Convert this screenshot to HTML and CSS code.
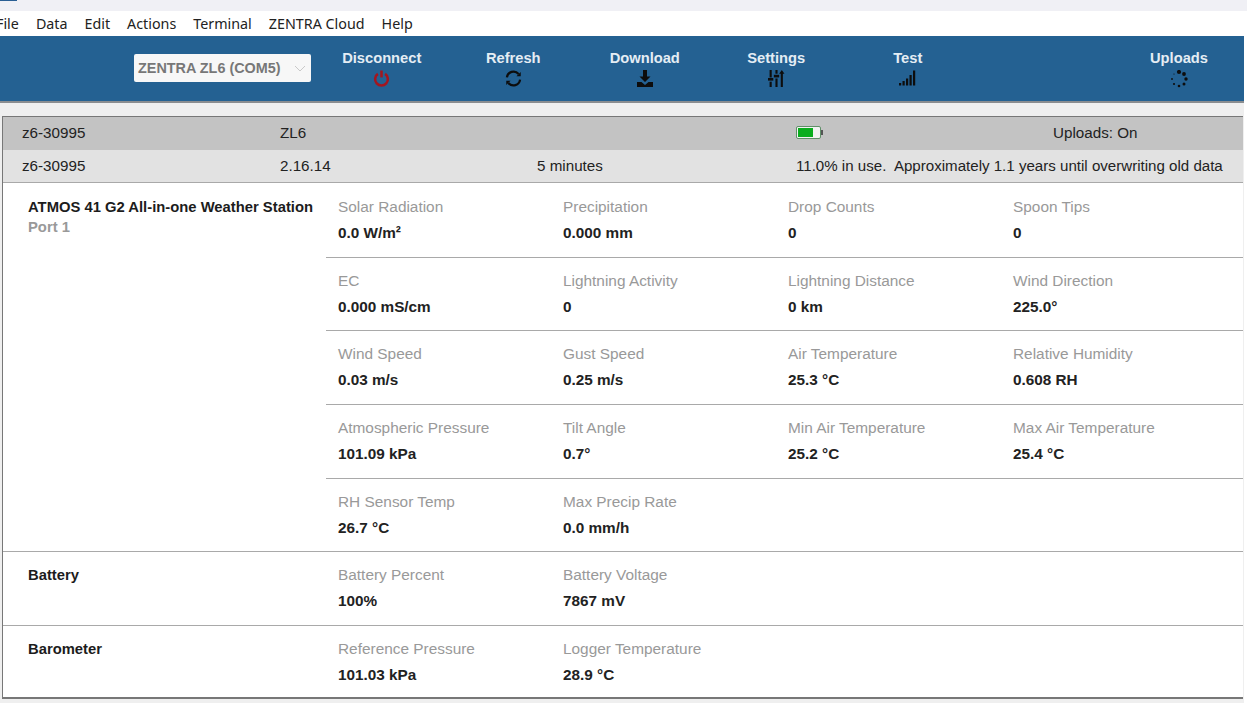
FILE: index.html
```html
<!DOCTYPE html>
<html lang="en">
<head>
    <meta charset="UTF-8">
    <title>ZENTRA Utility</title>
    <link rel="stylesheet" href="styles.css">
</head>
<body>
    <div class="titlebar"><span class="title-icon"></span></div>

    <nav class="menubar">
        <span class="menu-file">File</span>
        <span>Data</span>
        <span>Edit</span>
        <span>Actions</span>
        <span>Terminal</span>
        <span>ZENTRA Cloud</span>
        <span>Help</span>
    </nav>

    <header class="toolbar">
        <div class="device-select">
            <span>ZENTRA ZL6 (COM5)</span>
            <svg class="chevron" width="12" height="7" viewBox="0 0 12 7"><path d="M1 1l5 5 5-5" fill="none" stroke="#c9c9c9" stroke-width="1"/></svg>
        </div>
        <div class="tool">
            <span class="tool-name">Disconnect</span>
            <svg width="17" height="17" viewBox="0 0 16 16"><path d="M4.600 3.600a6 6 0 1 0 6.800 0" fill="none" stroke="#a3161f" stroke-width="2.400"/><path d="M8 .5v6.500" stroke="#a3161f" stroke-width="2.400"/></svg>
        </div>
        <div class="tool">
            <span class="tool-name">Refresh</span>
            <svg width="17" height="17" viewBox="0 0 16 16"><path d="M1.800 7A6.300 6.300 0 0 1 12.800 3.700M14.200 9A6.300 6.300 0 0 1 3.200 12.300" fill="none" stroke="#0d0d0d" stroke-width="2.100"/><path d="M14.800 1.800v4h-4zM1.200 14.200v-4h4z" fill="#0d0d0d"/></svg>
        </div>
        <div class="tool">
            <span class="tool-name">Download</span>
            <svg width="18" height="17" viewBox="0 0 18 17"><path d="M7 0h4v6.500h3.500L9 12 3.500 6.500H7z" fill="#0d0d0d"/><path d="M1 12h4.500L9 15l3.500-3H17v5H1z" fill="#0d0d0d"/></svg>
        </div>
        <div class="tool">
            <span class="tool-name">Settings</span>
            <svg width="17" height="17" viewBox="0 0 16 16"><g fill="#0d0d0d"><rect x="1.500" y="0" width="2" height="7"/><rect x="0" y="7.500" width="5" height="2.500"/><rect x="1.500" y="11" width="2" height="5"/><rect x="7" y="0" width="2" height="3.500"/><rect x="5.500" y="4.500" width="5" height="2.500"/><rect x="7" y="8" width="2" height="8"/><path d="M13 0l2.500 3.500h-1.500V16h-2V3.500h-1.500z"/></g></svg>
        </div>
        <div class="tool">
            <span class="tool-name">Test</span>
            <svg width="18" height="17" viewBox="0 0 18 16"><g fill="#0d0d0d"><rect x="0" y="12.500" width="2.200" height="2.500"/><rect x="3.500" y="10.500" width="2.200" height="4.500"/><rect x="7" y="8" width="2.200" height="7"/><rect x="10.500" y="4.500" width="2.200" height="10.500"/><rect x="14" y="0" width="2.200" height="15"/></g></svg>
        </div>
        <div class="tool tool-uploads">
            <span class="tool-name">Uploads</span>
            <svg width="18" height="18" viewBox="0 0 18 18"><g fill="#0d0d0d"><circle cx="9" cy="2" r="2.100"/><circle cx="14" cy="4" r="1.900"/><circle cx="16" cy="9" r="1.700"/><circle cx="14" cy="14" r="1.500"/><circle cx="9" cy="16" r="1.300"/><circle cx="4" cy="14" r="1.100"/><circle cx="2" cy="9" r=".9"/><circle cx="4" cy="4" r=".6"/></g></svg>
        </div>
    </header>

    <main class="content">
        <div class="panel">
            <div class="status status-top">
                <span>z6-30995</span>
                <span>ZL6</span>
                <span></span>
                <span class="battery"><span class="battery-fill"></span></span>
                <span>Uploads: On</span>
            </div>
            <div class="status status-sub">
                <span>z6-30995</span>
                <span>2.16.14</span>
                <span>5 minutes</span>
                <span class="status-wide">11.0% in use.&nbsp; Approximately 1.1 years until overwriting old data</span>
            </div>

            <section class="sensor">
                <div class="sensor-name">
                    <strong>ATMOS 41 G2 All-in-one Weather Station</strong>
                    <span>Port 1</span>
                </div>
                <div class="readings">
                    <div class="row">
                        <div class="reading"><span>Solar Radiation</span><b>0.0 W/m²</b></div>
                        <div class="reading"><span>Precipitation</span><b>0.000 mm</b></div>
                        <div class="reading"><span>Drop Counts</span><b>0</b></div>
                        <div class="reading"><span>Spoon Tips</span><b>0</b></div>
                    </div>
                    <div class="row">
                        <div class="reading"><span>EC</span><b>0.000 mS/cm</b></div>
                        <div class="reading"><span>Lightning Activity</span><b>0</b></div>
                        <div class="reading"><span>Lightning Distance</span><b>0 km</b></div>
                        <div class="reading"><span>Wind Direction</span><b>225.0°</b></div>
                    </div>
                    <div class="row">
                        <div class="reading"><span>Wind Speed</span><b>0.03 m/s</b></div>
                        <div class="reading"><span>Gust Speed</span><b>0.25 m/s</b></div>
                        <div class="reading"><span>Air Temperature</span><b>25.3 °C</b></div>
                        <div class="reading"><span>Relative Humidity</span><b>0.608 RH</b></div>
                    </div>
                    <div class="row">
                        <div class="reading"><span>Atmospheric Pressure</span><b>101.09 kPa</b></div>
                        <div class="reading"><span>Tilt Angle</span><b>0.7°</b></div>
                        <div class="reading"><span>Min Air Temperature</span><b>25.2 °C</b></div>
                        <div class="reading"><span>Max Air Temperature</span><b>25.4 °C</b></div>
                    </div>
                    <div class="row">
                        <div class="reading"><span>RH Sensor Temp</span><b>26.7 °C</b></div>
                        <div class="reading"><span>Max Precip Rate</span><b>0.0 mm/h</b></div>
                    </div>
                </div>
            </section>

            <section class="sensor sensor-small">
                <div class="sensor-name"><strong>Battery</strong></div>
                <div class="readings">
                    <div class="row">
                        <div class="reading"><span>Battery Percent</span><b>100%</b></div>
                        <div class="reading"><span>Battery Voltage</span><b>7867 mV</b></div>
                    </div>
                </div>
            </section>

            <section class="sensor sensor-small">
                <div class="sensor-name"><strong>Barometer</strong></div>
                <div class="readings">
                    <div class="row">
                        <div class="reading"><span>Reference Pressure</span><b>101.03 kPa</b></div>
                        <div class="reading"><span>Logger Temperature</span><b>28.9 °C</b></div>
                    </div>
                </div>
            </section>
        </div>
    </main>
</body>
</html>
```

FILE: styles.css
```css
/* Basic Styles */
html, body {
    height: 100%;
}

body {
    font-family: "Liberation Sans", Arial, sans-serif;
    font-size: 15.2px;
    color: #222;
    background-color: #fff;
    margin: 0;
    overflow: hidden;
}

.titlebar {
    height: 11px;
    background-color: #f0f0f5;
}

.title-icon {
    display: block;
    width: 17px;
    height: 1px;
    background-color: #2a5f94;
}

/* Menu */
.menubar {
    display: flex;
    gap: 17px;
    height: 25px;
    align-items: center;
    font-family: "Noto Sans", sans-serif;
    font-size: 14.300px;
    color: #222;
}

.menu-file {
    margin-left: -4px;
}

/* Toolbar */
.toolbar {
    display: flex;
    width: 1244px;
    height: 67px;
    box-sizing: border-box;
    padding-left: 134px;
    background-color: #246192;
    border-bottom: 2px solid #8a8d90;
}

.device-select {
    display: flex;
    align-items: center;
    justify-content: space-between;
    box-sizing: border-box;
    width: 177px;
    height: 28px;
    margin: 18px 5px 0 0;
    padding: 0 5px 0 4px;
    background-color: #f7f7f7;
    border-radius: 2px;
    font-size: 14.400px;
    font-weight: bold;
    color: #777;
}

.tool {
    display: flex;
    flex-direction: column;
    align-items: center;
    width: 131.500px;
    padding-top: 14px;
    color: #e4edf4;
    font-size: 14.700px;
    font-weight: bold;
}

.tool-name {
    line-height: 16px;
    margin-bottom: 4px;
}

.tool-uploads {
    width: 130px;
    margin-left: auto;
}

/* Panel */
.content {
    width: 1244px;
    height: 600px;
    box-sizing: border-box;
    padding: 13px 1px 0 2px;
    background-color: #efefef;
}

.panel {
    border: 1px solid #777;
    border-right: none;
    border-bottom-width: 2px;
    background-color: #fff;
}

.status {
    display: grid;
    grid-template-columns: 258px 257px 259px 257px 1fr;
    align-items: center;
    height: 33px;
    padding: 0 0 2px 19px;
    box-sizing: border-box;
}

.status-top {
    background-color: #c3c3c3;
}

.status-sub {
    background-color: #e2e2e2;
    border-bottom: 1px solid #a9a9a9;
}

.status-wide {
    grid-column: span 2;
    white-space: nowrap;
    font-size: 15.100px;
}

.battery {
    position: relative;
    display: block;
    width: 25px;
    height: 13px;
    box-sizing: border-box;
    padding: 1px;
    border: 1px solid #5f8f68;
    border-radius: 2px;
    background-color: #f2f2f2;
}

.battery::after {
    content: "";
    position: absolute;
    right: -3px;
    top: 3px;
    width: 2px;
    height: 5px;
    background-color: #555;
}

.battery-fill {
    display: block;
    width: 15px;
    height: 9px;
    background-color: #0aad1e;
}

/* Sensors */
.sensor {
    display: flex;
    border-bottom: 1px solid #a9a9a9;
}

.sensor:last-child {
    border-bottom: none;
}

.sensor-name {
    display: flex;
    flex-direction: column;
    width: 323px;
    flex-shrink: 0;
    box-sizing: border-box;
    padding: 14px 0 0 25px;
    line-height: 20px;
    white-space: nowrap;
}

.sensor-name strong {
    font-size: 14.800px;
    color: #1c1c1c;
}

.sensor-name span {
    font-weight: bold;
    font-size: 14.800px;
    color: #999;
}

.sensor-small .sensor-name {
    padding-top: 13px;
}

.readings {
    flex: 1;
}

.row {
    display: flex;
    height: 73.700px;
    box-sizing: border-box;
    padding: 15px 0 0 12px;
    border-bottom: 1px solid #a9a9a9;
}

.row:first-child {
    height: 74.700px;
    padding-top: 16px;
}

.row:last-child {
    height: 72.200px;
    border-bottom: none;
}

.sensor-small .row {
    height: 73px;
    padding-top: 15px;
}

.sensor:last-child .row {
    height: 71px;
}

.reading {
    display: flex;
    flex-direction: column;
    width: 225px;
    gap: 10px;
}

.reading span {
    line-height: 16px;
    font-size: 15.400px;
    color: #999;
}

.reading b {
    line-height: 16px;
    font-size: 15.300px;
    color: #222;
}
```
